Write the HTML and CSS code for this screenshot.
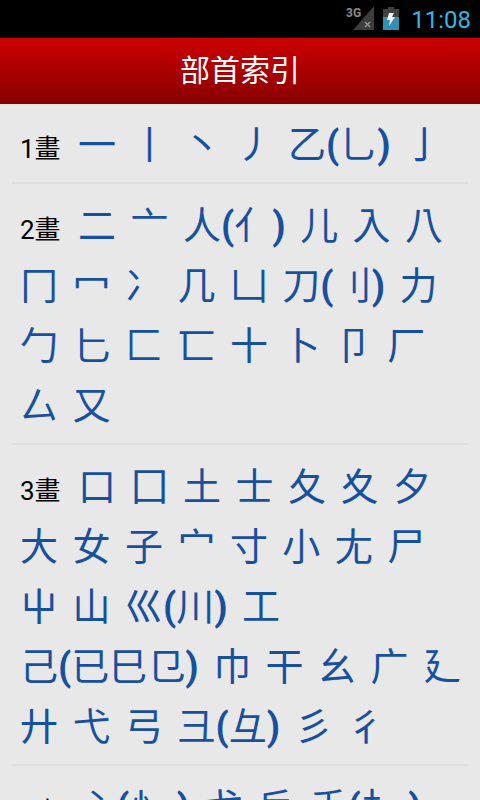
FILE: index.html
```html
<!DOCTYPE html>
<html lang="zh-Hant">
<head>
<meta charset="utf-8">
<meta name="viewport" content="width=device-width, initial-scale=1">
<title>部首索引</title>
<link rel="stylesheet" href="styles.css">
</head>
<body>
<div class="app">
  <div class="status">
    <svg class="signal" width="28" height="26" viewBox="0 0 28 26" aria-hidden="true">
      <path d="M28 0v24H7z" fill="#3d3d3d"/>
      <path d="M19 16l5 5M24 16l-5 5" stroke="#999" stroke-width="1.3"/>
      <text class="net" x="0" y="11">3G</text>
    </svg>
    <svg class="battery" width="16" height="24" viewBox="0 0 16 24" aria-hidden="true">
      <path d="M5 0h6v2h5v8H0V2h5z" fill="#404040"/>
      <path d="M0 10h16v13H0z" fill="#3390b5"/>
      <path d="M6 6h5l-2 4h3l-6 9 1-6H4z" fill="#eef4f6"/>
    </svg>
    <span class="clock">11:08</span>
  </div>
  <header class="bar"><h1>部首索引</h1></header>
  <main>
    <section class="group">
      <h2>1畫</h2>
      <a href="#r1">一</a>
      <a href="#r2">丨</a>
      <a href="#r3">丶</a>
      <a href="#r4">丿</a>
      <a href="#r5">乙<b>(</b>乚<b>)</b></a>
      <a href="#r6">亅</a>
    </section>
    <section class="group">
      <h2>2畫</h2>
      <a href="#r7">二</a>
      <a href="#r8">亠</a>
      <a href="#r9">人<b>(</b>亻<b>)</b></a>
      <a href="#r10">儿</a>
      <a href="#r11">入</a>
      <a href="#r12">八</a>
      <a href="#r13">冂</a>
      <a href="#r14">冖</a>
      <a href="#r15">冫</a>
      <a href="#r16">几</a>
      <a href="#r17">凵</a>
      <a href="#r18">刀<b>(</b>刂<b>)</b></a>
      <a href="#r19">力</a>
      <a href="#r20">勹</a>
      <a href="#r21">匕</a>
      <a href="#r22">匚</a>
      <a href="#r23">匸</a>
      <a href="#r24">十</a>
      <a href="#r25">卜</a>
      <a href="#r26">卩</a>
      <a href="#r27">厂</a>
      <a href="#r28">厶</a>
      <a href="#r29">又</a>
    </section>
    <section class="group">
      <h2>3畫</h2>
      <a href="#r30">口</a>
      <a href="#r31">囗</a>
      <a href="#r32">土</a>
      <a href="#r33">士</a>
      <a href="#r34">夂</a>
      <a href="#r35">夊</a>
      <a href="#r36">夕</a>
      <a href="#r37">大</a>
      <a href="#r38">女</a>
      <a href="#r39">子</a>
      <a href="#r40">宀</a>
      <a href="#r41">寸</a>
      <a href="#r42">小</a>
      <a href="#r43">尢</a>
      <a href="#r44">尸</a>
      <a href="#r45">屮</a>
      <a href="#r46">山</a>
      <a href="#r47">巛<b>(</b>川<b>)</b></a>
      <a href="#r48">工</a>
      <a href="#r49">己<b>(</b>已巳㔾<b>)</b></a>
      <a href="#r50">巾</a>
      <a href="#r51">干</a>
      <a href="#r52">幺</a>
      <a href="#r53">广</a>
      <a href="#r54">廴</a>
      <a href="#r55">廾</a>
      <a href="#r56">弋</a>
      <a href="#r57">弓</a>
      <a href="#r58">彐<b>(</b>彑<b>)</b></a>
      <a href="#r59">彡</a>
      <a href="#r60">彳</a>
    </section>
    <section class="group">
      <h2>4畫</h2>
      <a href="#r61">心<b>(</b>忄 <b>)</b></a>
      <a href="#r62">戈</a>
      <a href="#r63">戶</a>
      <a href="#r64">手<b>(</b>扌 <b>)</b></a>
    </section>
  </main>
</div>
</body>
</html>
```
FILE: styles.css
```css
* {
  box-sizing: border-box;
}

body {
  margin: 0;
  background: #e8e8e8;
  color: #000;
  font-family: Roboto, "Noto Sans CJK TC", sans-serif;
}

.app {
  display: flex;
  flex-direction: column;
  height: 100vh;
  overflow: hidden;
}

.status {
  display: flex;
  flex: none;
  align-items: center;
  justify-content: flex-end;
  height: 38px;
  padding-right: 9px;
  background: #000;
}

.signal {
  margin-right: 9px;
}

.net {
  fill: #8a8a8a;
  font-size: 12px;
  font-weight: 700;
}

.battery {
  margin-right: 12px;
}

.clock {
  padding-top: 2px;
  color: #33b5e5;
  font-size: 24px;
  line-height: 36px;
}

.bar {
  display: flex;
  flex: none;
  align-items: center;
  justify-content: center;
  height: 66px;
  background: linear-gradient(#cc0000, #880000);
}

.bar h1 {
  margin: 0;
  color: #fff;
  font-size: 30px;
  font-weight: 400;
  line-height: 40px;
}

main {
  flex: 1;
  min-height: 0;
  padding: 0 12px;
  overflow: hidden;
}

.group {
  padding: 16px 0 3px 4px;
  border-bottom: 2px solid #dfdfdf;
  font-size: 26px;
  line-height: 60px;
}

.group:first-child {
  padding-top: 15px;
}

.group h2 {
  display: inline;
  margin: 0 3px 0 0;
  font-size: 26px;
  font-weight: 400;
}

.group h2,
.group a {
  padding: 0 4px;
}

.group a {
  color: #1850a0;
  font-size: 38px;
  line-height: 1;
  text-decoration: none;
  white-space: nowrap;
}

.group b {
  font-weight: 700;
}
```
